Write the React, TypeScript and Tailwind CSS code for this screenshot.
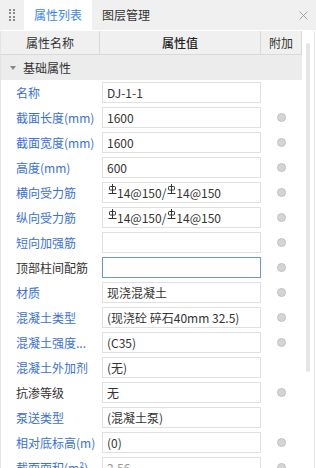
import React from "react";

const Rebar = () => (
  <svg width="9" height="10" viewBox="0 0 9 10" className="inline-block align-top mx-[0.5px]" fill="none" stroke="#333" strokeWidth="1">
    <line x1="4.5" y1="0" x2="4.5" y2="9" />
    <rect x="1.5" y="2.5" width="6" height="3.5" rx="0.8" />
    <line x1="0.5" y1="9.5" x2="8.5" y2="9.5" />
  </svg>
);

type Row = { label: string; value: React.ReactNode; blue: boolean; dot: boolean; focus?: boolean; gray?: boolean };

const rebarVal = (
  <span>
    <Rebar />14@150/<Rebar />14@150
  </span>
);

const rows: Row[] = [
  { label: "名称", value: "DJ-1-1", blue: true, dot: false },
  { label: "截面长度(mm)", value: "1600", blue: true, dot: true },
  { label: "截面宽度(mm)", value: "1600", blue: true, dot: true },
  { label: "高度(mm)", value: "600", blue: true, dot: true },
  { label: "横向受力筋", value: rebarVal, blue: true, dot: true },
  { label: "纵向受力筋", value: rebarVal, blue: true, dot: true },
  { label: "短向加强筋", value: "", blue: true, dot: true },
  { label: "顶部柱间配筋", value: "", blue: false, dot: true, focus: true },
  { label: "材质", value: "现浇混凝土", blue: true, dot: true },
  { label: "混凝土类型", value: "(现浇砼 碎石40mm 32.5)", blue: true, dot: true },
  { label: "混凝土强度...", value: "(C35)", blue: true, dot: true },
  { label: "混凝土外加剂", value: "(无)", blue: true, dot: false },
  { label: "抗渗等级", value: "无", blue: false, dot: true },
  { label: "泵送类型", value: "(混凝土泵)", blue: true, dot: false },
  { label: "相对底标高(m)", value: "(0)", blue: true, dot: true },
  { label: "截面面积(m²)", value: "2.56", blue: true, dot: true, gray: true },
];

export default function App() {
  return (
    <div
      className="w-[316px] h-[468px] overflow-hidden bg-white text-[12px] text-[#333] flex flex-col"
      style={{ fontFamily: '"Noto Sans CJK SC", "Microsoft YaHei", sans-serif' }}
    >
      {/* Tab bar */}
      <div className="h-[30px] shrink-0 bg-[#f0f0f0] flex items-stretch">
        <div className="w-[24px] flex items-center justify-center">
          <div className="grid grid-cols-2 gap-x-[2.5px] gap-y-[1.5px]">
            {Array.from({ length: 8 }).map((_, i) => (
              <span key={i} className="w-[2px] h-[2px] bg-[#8a8a8a]" />
            ))}
          </div>
        </div>
        <div className="w-[68px] bg-white flex items-center justify-center text-[#3d86ee]">属性列表</div>
        <div className="w-[68px] flex items-center justify-center text-[#333]">图层管理</div>
        <div className="flex-1" />
        <div className="w-[26px] flex items-center justify-center">
          <svg width="9" height="9" viewBox="0 0 9 9" stroke="#a0a0a0" strokeWidth="1">
            <line x1="0.5" y1="0.5" x2="8.5" y2="8.5" />
            <line x1="8.5" y1="0.5" x2="0.5" y2="8.5" />
          </svg>
        </div>
      </div>

      <div className="flex flex-1 min-h-0 border-t border-white">
        {/* Table */}
        <div className="w-[302px] flex flex-col border-l border-[#e4e4e4]">
          <div className="h-[24px] shrink-0 grid grid-cols-[99px_161px_41px] bg-[#f0f0f0] border-b border-[#d9d9d9]">
            <div className="flex items-center justify-center border-r border-[#d9d9d9]">属性名称</div>
            <div className="flex items-center justify-center border-r border-[#d9d9d9] text-[#222] font-medium">属性值</div>
            <div className="flex items-center justify-center border-r border-[#d9d9d9]">附加</div>
          </div>
          <div className="h-[25px] shrink-0 bg-[#ececec] flex items-center">
            <svg width="6" height="4" viewBox="0 0 6 4" className="ml-[9px] mr-[7px]">
              <path d="M0 0 L6 0 L3 4 Z" fill="#888" />
            </svg>
            <span>基础属性</span>
          </div>
          {rows.map((r, i) => (
            <div key={i} className="h-[25px] shrink-0 grid grid-cols-[101px_159px_41px] items-center">
              <div className={`pl-[15px] whitespace-nowrap ${r.blue ? "text-[#3a6fdc]" : "text-[#333]"}`}>{r.label}</div>
              <div
                className={`h-[21px] border flex items-center pl-[4px] whitespace-nowrap overflow-hidden ${
                  r.focus ? "border-[#6a95d8]" : "border-[#e0e0e0]"
                } ${r.gray ? "text-[#999]" : "text-[#333]"}`}
              >
                {r.value}
              </div>
              <div className="flex items-center justify-center">
                {r.dot && <span className="w-[9px] h-[9px] rounded-full bg-[#d4d4d4] border border-[#c2c2c2]" />}
              </div>
            </div>
          ))}
        </div>
        {/* Scrollbar */}
        <div className="flex-1 flex justify-center pt-[12px] border-r border-[#e4e4e4] mr-[1px]">
          <div className="w-[4px] h-[329px] rounded-full bg-[#e6e6e6]" />
        </div>
      </div>
    </div>
  );
}
